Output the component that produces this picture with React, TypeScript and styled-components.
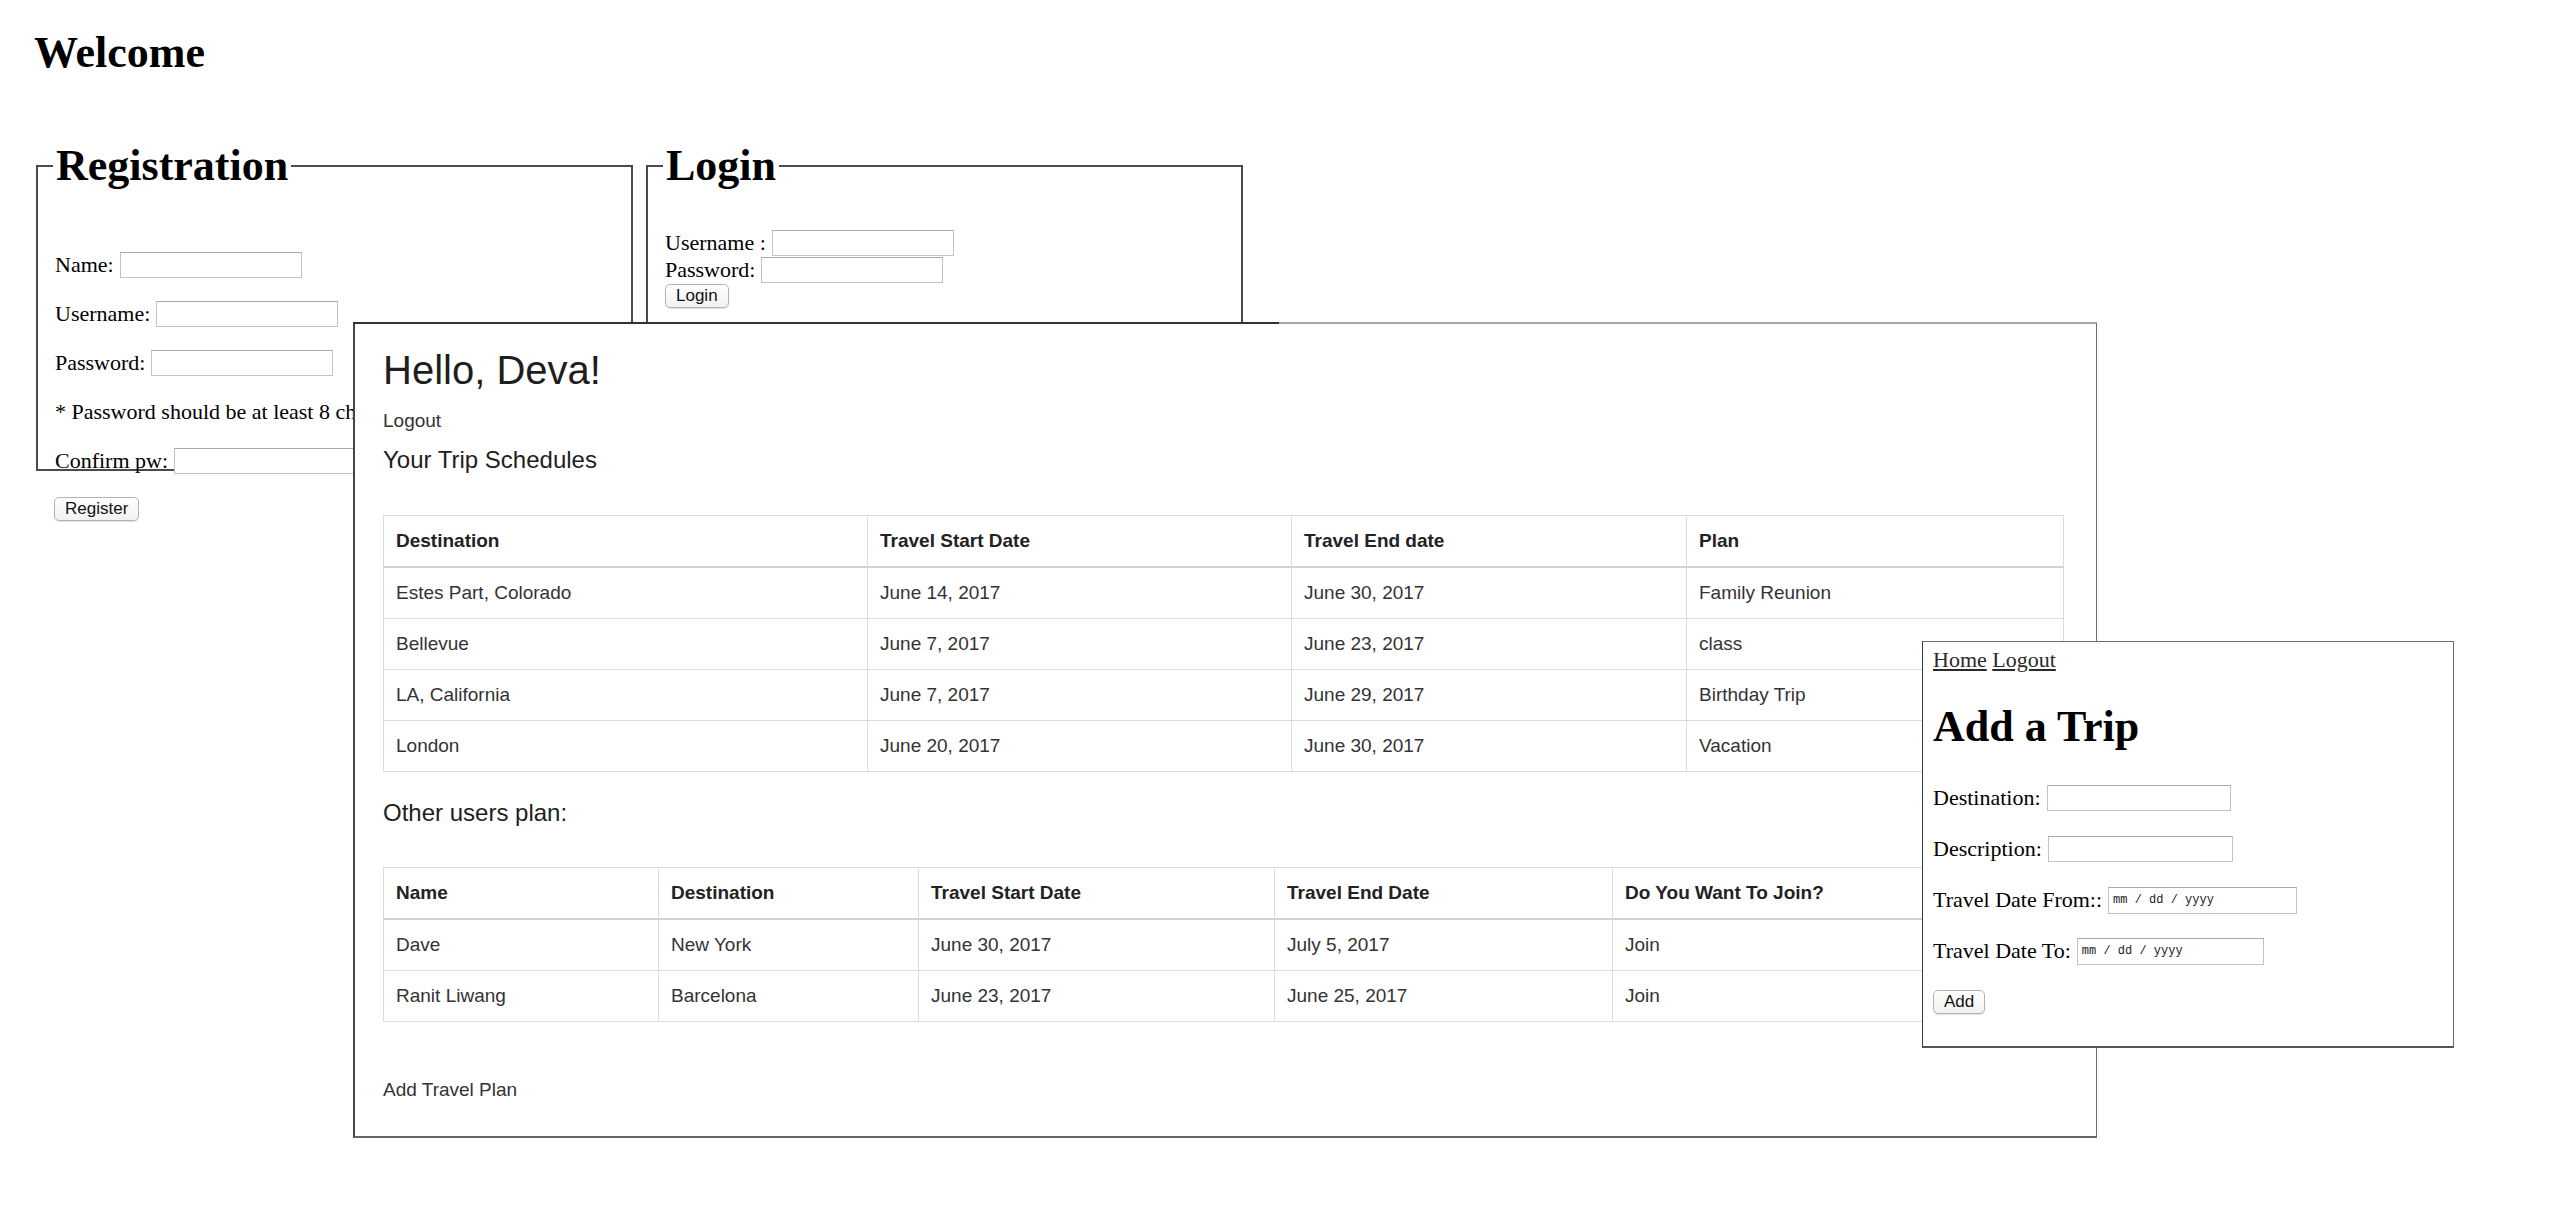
import styled, {createGlobalStyle} from "styled-components";

const GlobalStyle = createGlobalStyle`
    html, body {
        margin: 0;
        padding: 0;
        background: #fff;
    }

    body {
        font-family: "Liberation Serif", "Times New Roman", serif;
        color: #000;
    }
`;

const Stage = styled.div`
    position: relative;
    width: 2560px;
    height: 1208px;
    overflow: hidden;
    background: #fff;
`;

/* ---------- welcome page (bottom screenshot) ---------- */

const WelcomePage = styled.div`
    padding: 28px 0 0 34px;
    font-size: 22px;
`;

const PageTitle = styled.h1`
    margin: 0 0 63px;
    font-size: 44px;
    line-height: 50px;
    font-weight: 700;
`;

const PanelRow = styled.div`
    display: flex;
    align-items: stretch;
    gap: 9px;
`;

const FieldSet = styled.fieldset`
    box-sizing: border-box;
    width: 597px;
    min-width: 0;
    margin: 0 2px;
    padding: 0 16px 0 17px;
    border: 2px solid #4a4a4a;
`;

const Legend = styled.legend`
    margin-left: -2px;
    padding: 0 3px;
    font-size: 44px;
    line-height: 50px;
    font-weight: 700;
`;

const RegForm = styled.div`
    display: flex;
    flex-direction: column;
    gap: 23px;
    padding-top: 61px;
    margin-bottom: -5px;
`;

const LoginForm = styled.div`
    display: flex;
    flex-direction: column;
    padding-top: 38px;
`;

const FieldLine = styled.div<{ $h?: number }>`
    display: flex;
    align-items: center;
    gap: 6px;
    height: ${(p) => p.$h ?? 26}px;
    white-space: nowrap;
`;

/* the hint runs under the dashboard window, so only its visible part is kept */
const HintLine = styled(FieldLine)`
    width: 298px;
    overflow: hidden;
`;

const TextInput = styled.input<{ $w?: number; $h?: number }>`
    box-sizing: border-box;
    flex: none;
    width: ${(p) => p.$w ?? 182}px;
    height: ${(p) => p.$h ?? 26}px;
    margin: 0;
    padding: 0 4px;
    background: #fff;
    border: 1px solid #c4c4c4;
    border-top-color: #a9a9a9;
    border-radius: 0;
    font: 12px "Liberation Mono", "Courier New", monospace;
    color: #222;

    &::placeholder {
        color: #222;
    }
`;

const PushButton = styled.button`
    box-sizing: border-box;
    height: 24px;
    margin: 0;
    padding: 0 10px;
    font: 17px "Liberation Sans", Arial, sans-serif;
    color: #111;
    background: linear-gradient(#ffffff, #f1f1f1);
    border: 1px solid #b3b3b3;
    border-radius: 5px;
    box-shadow: 0 1px 1px rgba(0, 0, 0, 0.12);
`;

const ButtonBar = styled.div<{ $top?: number; $left?: number }>`
    display: flex;
    margin: ${(p) => p.$top ?? 0}px 0 0 ${(p) => p.$left ?? 0}px;
`;

/* ---------- dashboard (middle screenshot) ---------- */

const Dashboard = styled.section`
    position: absolute;
    left: 353px;
    top: 322px;
    box-sizing: border-box;
    width: 1744px;
    height: 816px;
    padding: 24px 32px 0 28px;
    background: #fff;
    border: 1px solid #707070;
    border-top: 2px solid #a8a8a8;
    border-left: 2px solid #454545;
    border-bottom: 2px solid #666;
    font-family: "Liberation Sans", Arial, Helvetica, sans-serif;
    color: #333;

    &::before {
        content: "";
        position: absolute;
        top: -2px;
        left: -2px;
        width: 926px;
        height: 2px;
        background: #333;
    }
`;

const Greeting = styled.h2`
    margin: 0;
    font-size: 40px;
    line-height: 44px;
    font-weight: 400;
    color: #1e1e1e;
`;

const PlainLink = styled.div<{ $top: number }>`
    margin-top: ${(p) => p.$top}px;
    font-size: 19px;
    line-height: 27px;
    color: #333;
`;

const SectionTitle = styled.h4<{ $top: number }>`
    margin: ${(p) => p.$top}px 0 0;
    font-size: 24px;
    line-height: 26px;
    font-weight: 400;
    color: #1e1e1e;
`;

const DataTable = styled.table<{ $top: number }>`
    width: 100%;
    margin-top: ${(p) => p.$top}px;
    border-collapse: collapse;
    table-layout: fixed;
    font-size: 19px;
    line-height: 28px;

    th, td {
        padding: 11px 12px;
        border: 1px solid #dcdcdc;
        text-align: left;
        vertical-align: middle;
        white-space: nowrap;
        overflow: hidden;
    }

    th {
        font-weight: 700;
        color: #222;
        border-bottom: 2px solid #d2d2d2;
    }

    td {
        color: #333;
    }
`;

/* ---------- add a trip (top screenshot) ---------- */

const AddTripWindow = styled.section`
    position: absolute;
    left: 1922px;
    top: 641px;
    box-sizing: border-box;
    width: 532px;
    height: 407px;
    padding: 5px 10px 0;
    background: #fff;
    border: 1px solid #6c6c6c;
    border-left-color: #3a3a3a;
    border-bottom: 2px solid #555;
    font-size: 22px;
    color: #000;
`;

const NavLine = styled.nav`
    line-height: 26px;

    a {
        color: #2a2a2a;
        text-decoration: underline;
    }
`;

const TripTitle = styled.h1`
    margin: 29px 0 0;
    font-size: 44px;
    line-height: 50px;
    font-weight: 700;
`;

const TripForm = styled.div`
    display: flex;
    flex-direction: column;
    gap: 23px;
    margin-top: 32px;
`;

const myTrips = [
    ["Estes Part, Colorado", "June 14, 2017", "June 30, 2017", "Family Reunion"],
    ["Bellevue", "June 7, 2017", "June 23, 2017", "class"],
    ["LA, California", "June 7, 2017", "June 29, 2017", "Birthday Trip"],
    ["London", "June 20, 2017", "June 30, 2017", "Vacation"],
];

const otherPlans = [
    ["Dave", "New York", "June 30, 2017", "July 5, 2017", "Join"],
    ["Ranit Liwang", "Barcelona", "June 23, 2017", "June 25, 2017", "Join"],
];

function SimpleTable({
                         top,
                         widths,
                         head,
                         rows,
                     }: {
    top: number;
    widths: number[];
    head: string[];
    rows: string[][];
}) {
    return (
        <DataTable $top={top}>
            <colgroup>
                {head.map((h, i) => (
                    <col key={h} style={i < widths.length ? {width: widths[i]} : undefined}/>
                ))}
            </colgroup>
            <thead>
            <tr>
                {head.map((h) => (
                    <th key={h}>{h}</th>
                ))}
            </tr>
            </thead>
            <tbody>
            {rows.map((r, ri) => (
                <tr key={ri}>
                    {r.map((c, ci) => (
                        <td key={ci}>{c}</td>
                    ))}
                </tr>
            ))}
            </tbody>
        </DataTable>
    );
}

export default function App() {
    return (
        <Stage>
            <GlobalStyle/>

            <WelcomePage>
                <PageTitle>Welcome</PageTitle>
                <PanelRow>
                    <FieldSet>
                        <Legend>Registration</Legend>
                        <RegForm>
                            <FieldLine>
                                Name: <TextInput type="text"/>
                            </FieldLine>
                            <FieldLine>
                                Username: <TextInput type="text"/>
                            </FieldLine>
                            <FieldLine>
                                Password: <TextInput type="password"/>
                            </FieldLine>
                            <HintLine>* Password should be at least 8 characters long</HintLine>
                            <FieldLine>
                                Confirm pw: <TextInput type="password"/>
                            </FieldLine>
                        </RegForm>
                    </FieldSet>
                    <FieldSet>
                        <Legend>Login</Legend>
                        <LoginForm>
                            <FieldLine $h={27}>
                                Username : <TextInput type="text"/>
                            </FieldLine>
                            <FieldLine $h={27}>
                                Password: <TextInput type="password"/>
                            </FieldLine>
                            <ButtonBar $top={1}>
                                <PushButton>Login</PushButton>
                            </ButtonBar>
                        </LoginForm>
                    </FieldSet>
                </PanelRow>
                <ButtonBar $top={26} $left={20}>
                    <PushButton>Register</PushButton>
                </ButtonBar>
            </WelcomePage>

            <Dashboard>
                <Greeting>Hello, Deva!</Greeting>
                <PlainLink $top={15}>Logout</PlainLink>
                <SectionTitle $top={13}>Your Trip Schedules</SectionTitle>
                <SimpleTable
                    top={42}
                    widths={[484, 424, 395]}
                    head={["Destination", "Travel Start Date", "Travel End date", "Plan"]}
                    rows={myTrips}
                />
                <SectionTitle $top={28}>Other users plan:</SectionTitle>
                <SimpleTable
                    top={41}
                    widths={[275, 260, 356, 338]}
                    head={["Name", "Destination", "Travel Start Date", "Travel End Date", "Do You Want To Join?"]}
                    rows={otherPlans}
                />
                <PlainLink $top={54}>Add Travel Plan</PlainLink>
            </Dashboard>

            <AddTripWindow>
                <NavLine>
                    <a href="#">Home</a> <a href="#">Logout</a>
                </NavLine>
                <TripTitle>Add a Trip</TripTitle>
                <TripForm>
                    <FieldLine $h={28}>
                        Destination: <TextInput type="text" $w={184}/>
                    </FieldLine>
                    <FieldLine $h={28}>
                        Description: <TextInput type="text" $w={185}/>
                    </FieldLine>
                    <FieldLine $h={28}>
                        Travel Date From:: <TextInput type="text" $w={189} $h={27} placeholder="mm / dd / yyyy"/>
                    </FieldLine>
                    <FieldLine $h={28}>
                        Travel Date To: <TextInput type="text" $w={187} $h={27} placeholder="mm / dd / yyyy"/>
                    </FieldLine>
                    <FieldLine $h={28}>
                        <PushButton>Add</PushButton>
                    </FieldLine>
                </TripForm>
            </AddTripWindow>
        </Stage>
    );
}
